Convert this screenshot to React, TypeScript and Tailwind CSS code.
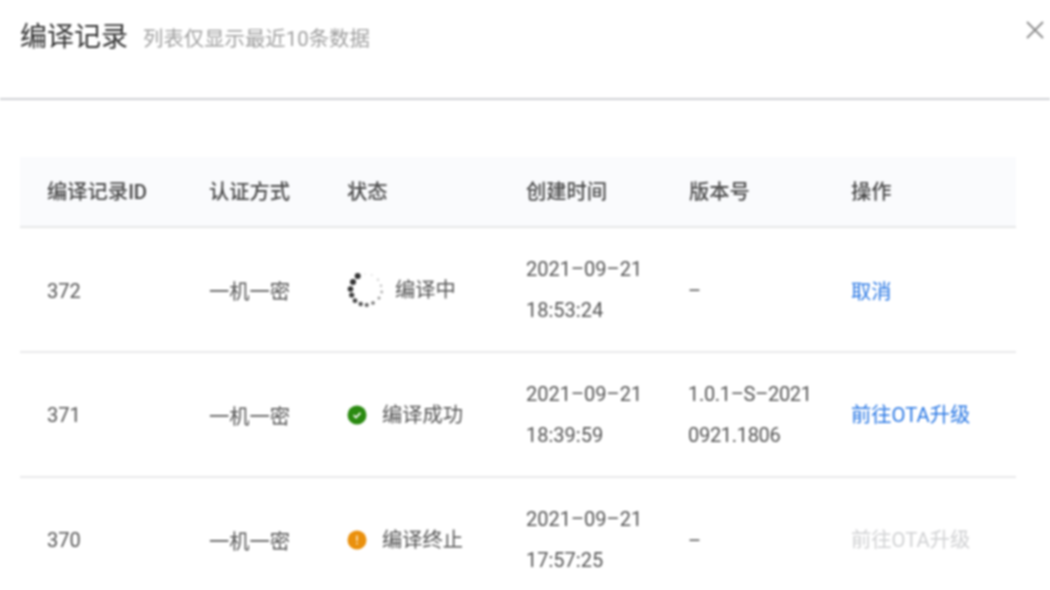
import React from 'react';

type Status = 'running' | 'success' | 'stopped';

interface BuildRecord {
  id: string;
  idClass: string;
  status: Status;
  statusText: string;
  date: string;
  time: string;
  version: string[];
  action: string;
  actionClass: string;
}

const records: BuildRecord[] = [
  { id: '372', idClass: 'pt-[2px]', status: 'running', statusText: '编译中', date: '2021–09–21', time: '18:53:24', version: ['–'], action: '取消', actionClass: 'pt-[6px] text-[#2a78e4]' },
  { id: '371', idClass: '', status: 'success', statusText: '编译成功', date: '2021–09–21', time: '18:39:59', version: ['1.0.1–S–2021', '0921.1806'], action: '前往OTA升级', actionClass: 'pt-[2px] text-[#2a78e4]' },
  { id: '370', idClass: '', status: 'stopped', statusText: '编译终止', date: '2021–09–21', time: '17:57:25', version: ['–'], action: '前往OTA升级', actionClass: 'pt-[2px] text-[#d0d1d3]' },
];

const spinnerDots = [
  { x: 357.7, y: 277, r: 3, o: 1 },
  { x: 353, y: 283, r: 3, o: 1 },
  { x: 350.5, y: 290, r: 2.8, o: 1 },
  { x: 351.7, y: 296, r: 2.6, o: 0.95 },
  { x: 355, y: 301.7, r: 2.4, o: 0.9 },
  { x: 360.7, y: 305, r: 2.2, o: 0.85 },
  { x: 366.7, y: 306, r: 2, o: 0.8 },
  { x: 373, y: 304, r: 1.8, o: 0.7 },
  { x: 379, y: 299, r: 1.5, o: 0.5 },
  { x: 381.7, y: 293, r: 1.4, o: 0.4 },
  { x: 381, y: 286.7, r: 1.3, o: 0.3 },
  { x: 378, y: 280.7, r: 1.2, o: 0.22 },
  { x: 371.7, y: 276, r: 1.1, o: 0.14 },
  { x: 365, y: 275, r: 1, o: 0.08 },
];

const Spinner = () => (
  <svg width="36" height="36" viewBox="347 273 36 36" className="shrink-0">
    {spinnerDots.map((d, i) => (
      <circle key={i} cx={d.x} cy={d.y} r={d.r} fill="#333333" fillOpacity={d.o} />
    ))}
  </svg>
);

const SuccessIcon = () => (
  <svg width="20" height="20" viewBox="0 0 20 20" className="shrink-0">
    <circle cx="10" cy="10" r="9.5" fill="#2a8a10" />
    <path d="M6.6 10.2l2.4 2.3 4.4-4.6" fill="none" stroke="#fff" strokeWidth="1.7" />
  </svg>
);

const StoppedIcon = () => (
  <svg width="20" height="20" viewBox="0 0 20 20" className="shrink-0">
    <circle cx="10" cy="10" r="9.5" fill="#ea900c" />
    <path d="M10 5.6v5.4" stroke="#fbe3bd" strokeWidth="1.7" />
    <circle cx="10" cy="13.4" r="1" fill="#fbe3bd" />
  </svg>
);

const StatusCell = ({ status, text }: { status: Status; text: string }) => {
  if (status === 'running') {
    return (
      <div className="flex items-center gap-[12px] -ml-[1px]">
        <Spinner />
        <span className="pt-[2px]">{text}</span>
      </div>
    );
  }
  return (
    <div className="flex items-center gap-[15px] -ml-[1px]">
      {status === 'success' ? <SuccessIcon /> : <StoppedIcon />}
      <span className="pt-[2px]">{text}</span>
    </div>
  );
};

const gridCols = 'grid grid-cols-[163px_138px_178px_162px_163px_192px] items-center pl-[27px]';

export default function App() {
  return (
    <div className="h-[590px] w-[1050px] overflow-hidden bg-white blur-[0.8px] font-['Roboto','Noto_Sans_CJK_SC',sans-serif]">
      <div className="flex h-[100px] justify-between border-b-2 border-[#cfd0d4] pl-[20px] pr-[6px]">
        <div className="flex h-[75px] items-center gap-[15px]">
          <h1 className="text-[27px] font-normal text-[#333333]">编译记录</h1>
          <span className="pt-[3px] text-[20.4px] text-[#a0a0a0]">列表仅显示最近10条数据</span>
        </div>
        <svg width="18" height="18" viewBox="0 0 18 18" className="mt-[21px]">
          <path d="M1 1l16 16M17 1L1 17" stroke="#8c8c8c" strokeWidth="1.8" />
        </svg>
      </div>

      <div className="ml-[20px] mr-[34px] mt-[57px] text-[20.3px] text-[#555555]">
        <div className={`${gridCols} h-[71px] border-b-2 border-[#e6e7e8] bg-[#fafbfd] pt-[2px] font-medium text-[#4a4a4a]`}>
          <div>编译记录ID</div>
          <div className="-ml-[1px]">认证方式</div>
          <div className="-ml-[1px]">状态</div>
          <div>创建时间</div>
          <div className="ml-[1px]">版本号</div>
          <div>操作</div>
        </div>
        {records.map((r) => (
          <div key={r.id} className={`${gridCols} h-[125px] border-b-2 border-[#e9e9ea]`}>
            <div className={`text-[20px] ${r.idClass}`}>{r.id}</div>
            <div className="-ml-[1px] pt-[6px]">一机一密</div>
            <StatusCell status={r.status} text={r.statusText} />
            <div className="text-[20px] leading-[41px]">
              <div>{r.date}</div>
              <div>{r.time}</div>
            </div>
            <div className={`text-[20px] leading-[41px] tracking-[-0.3px] ${r.version.length === 1 ? 'pt-[4px]' : ''}`}>
              {r.version.map((v) => (
                <div key={v}>{v}</div>
              ))}
            </div>
            <div className={r.actionClass}>{r.action}</div>
          </div>
        ))}
      </div>
    </div>
  );
}
